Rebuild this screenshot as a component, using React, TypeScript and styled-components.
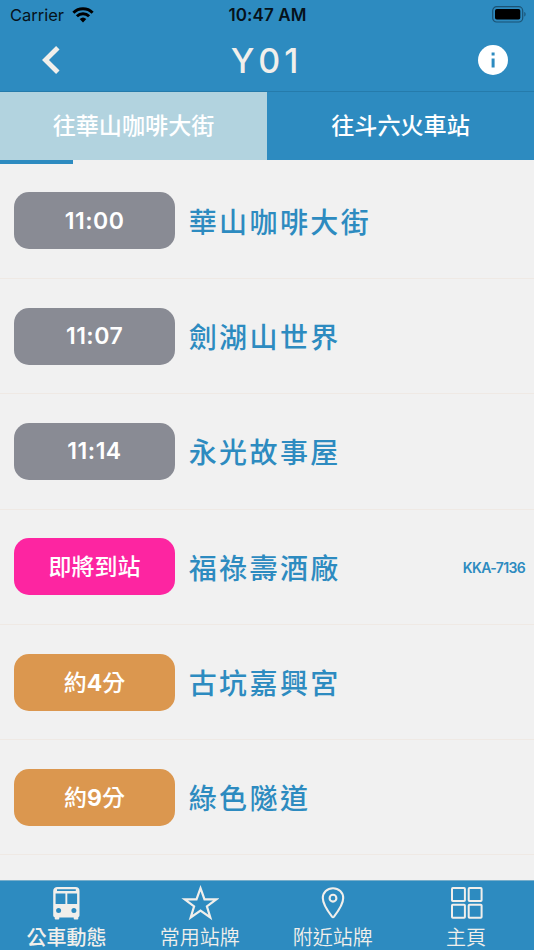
import { FC, ReactNode } from "react";
import styled, { createGlobalStyle } from "styled-components";

interface StopType {
    name: string,
    status: string,
    kind: "later" | "arriving" | "soon",
    plate?: string
}

interface NavType {
    label: string,
    icon: ReactNode,
    active?: boolean
}

const badgeColors = {
    later: "#898b94",
    arriving: "#fd25a1",
    soon: "#db974f"
};

const stops: StopType[] = [
    { name: "華山咖啡大街", status: "11:00", kind: "later" },
    { name: "劍湖山世界", status: "11:07", kind: "later" },
    { name: "永光故事屋", status: "11:14", kind: "later" },
    { name: "福祿壽酒廠", status: "即將到站", kind: "arriving", plate: "KKA-7136" },
    { name: "古坑嘉興宮", status: "約4分", kind: "soon" },
    { name: "綠色隧道", status: "約9分", kind: "soon" }
];

const WifiIcon = () => (
    <svg width="22" height="16" viewBox="0 0 22 16">
        <g fill="none" stroke="#000" strokeWidth="3">
            <path d="M1.4 5.7a13.7 13.7 0 0 1 19.2 0" />
            <path d="M4.9 9.3a8.7 8.7 0 0 1 12.2 0" />
        </g>
        <path d="M7.7 12.1a4.8 4.8 0 0 1 6.6 0L11 15.5z" />
    </svg>
);

const BatteryIcon = () => (
    <svg width="35" height="17" viewBox="0 0 35 17">
        <rect x="0.7" y="0.7" width="30" height="15.3" rx="4" fill="none" stroke="#1b5374" strokeWidth="1.2" />
        <rect x="3" y="3" width="25.3" height="10.6" rx="1.8" />
        <path d="M32.3 6c1.7.4 1.7 4.2 0 4.6z" fill="#1b5374" />
    </svg>
);

const BackIcon = () => (
    <svg width="20" height="30" viewBox="0 0 20 30">
        <path d="M16.8 2.8 4.5 15l12.3 12.2" fill="none" stroke="#f1efeb" strokeWidth="4.9" />
    </svg>
);

const InfoIcon = () => (
    <svg width="30" height="30" viewBox="0 0 30 30">
        <circle cx="15" cy="15" r="15" fill="#fff" />
        <path d="M13.6 7.6h3v2.9h-3zM13.6 13.6h3v9h-3z" fill="#2d8bc0" />
    </svg>
);

const BusIcon = () => (
    <svg width="28" height="36" viewBox="0 0 28 36">
        <path
            fillRule="evenodd"
            d="M4.5 2h18a4 4 0 0 1 4 4v24.5a2 2 0 0 1-1.2 1.8v1.2q0 1-1 1h-2.6q-1 0-1-1v-1H6.3v1q0 1-1 1H2.7q-1 0-1-1v-1.2A2 2 0 0 1 .2 30.5V6a4 4 0 0 1 4.300-4zM4 4.300v1.600h18.800V4.300zM2.600 8.500v10.600h9.800V8.500zM14.300 8.500v10.600h9.800V8.500zM5.600 23a2.500 2.500 0 1 0 0 5 2.500 2.500 0 0 0 0-5zM20.900 23a2.500 2.500 0 1 0 0 5 2.500 2.500 0 0 0 0-5z"
            fill="#f1efeb"
        />
    </svg>
);

const StarIcon = () => (
    <svg width="38" height="36" viewBox="0 0 38 36">
        <path
            d="M19.5 3.2 23.5 14.3H35.3L25.9 21.3 29.3 32.5 19.5 25.6 9.7 32.5 13.1 21.3 3.7 14.3H15.5z"
            fill="none"
            stroke="#f1efeb"
            strokeWidth="2.2"
        />
    </svg>
);

const PinIcon = () => (
    <svg width="24" height="36" viewBox="0 0 24 36">
        <g fill="none" stroke="#f1efeb" strokeWidth="2.1">
            <path d="M12 3.2C6.2 3.2 1.8 7.4 1.8 13c0 6.3 6 14.5 9.2 18.7q1 1.2 2 0C16.2 27.5 22.2 19.3 22.2 13c0-5.6-4.4-9.8-10.2-9.8z" />
            <circle cx="12" cy="13.2" r="3.4" />
        </g>
    </svg>
);

const GridIcon = () => (
    <svg width="34" height="36" viewBox="0 0 34 36">
        <g fill="none" stroke="#f1efeb" strokeWidth="2">
            <rect x="3" y="3.100" width="12.9" height="12.9" rx="0.8" />
            <rect x="19.7" y="3.100" width="12.9" height="12.9" rx="0.8" />
            <rect x="3" y="19.8" width="12.9" height="12.9" rx="0.8" />
            <rect x="19.7" y="19.8" width="12.9" height="12.9" rx="0.8" />
        </g>
    </svg>
);

const navItems: NavType[] = [
    { label: "公車動態", icon: <BusIcon />, active: true },
    { label: "常用站牌", icon: <StarIcon /> },
    { label: "附近站牌", icon: <PinIcon /> },
    { label: "主頁", icon: <GridIcon /> }
];

// the minutes are drawn heavier than the words around them
const StatusText: FC<{ text: string }> = ({ text }) => (
    <span>
        {text.split(/(\d+)/).map((part, i) => i % 2 ? <b key={i}>{part}</b> : part)}
    </span>
);

const StopRow: FC<{ stop: StopType }> = ({ stop }) => (
    <Row>
        <Badge $kind={stop.kind}>
            {stop.kind === "soon" ? <StatusText text={stop.status} /> : stop.status}
        </Badge>
        <StopName>{stop.name}</StopName>
        {stop.plate && <Plate>{stop.plate}</Plate>}
    </Row>
);

export default function App() {
    return (
        <Screen>
            <GlobalStyle />
            <StatusBar>
                <Carrier>Carrier <WifiIcon /></Carrier>
                <Clock>10:47 AM</Clock>
                <BatteryIcon />
            </StatusBar>
            <Header>
                <BackIcon />
                <Title>Y01</Title>
                <InfoIcon />
            </Header>
            <Tabs>
                <Tab $active>往華山咖啡大街</Tab>
                <Tab>往斗六火車站</Tab>
            </Tabs>
            <Progress><ProgressBar /></Progress>
            <List>
                {stops.map((stop) => <StopRow key={stop.name} stop={stop} />)}
            </List>
            <BottomNav>
                {navItems.map((item) => (
                    <NavItem key={item.label} $active={item.active}>
                        {item.icon}
                        <span>{item.label}</span>
                    </NavItem>
                ))}
            </BottomNav>
        </Screen>
    )
}

const GlobalStyle = createGlobalStyle`
    *{
        box-sizing: border-box;
    }

    body{
        margin: 0;
        overflow: hidden;
        font-family: Inter, "Noto Sans CJK TC", sans-serif;
    }

    svg{
        display: block;
        flex-shrink: 0;
    }
`

const Screen = styled.div`
    width: 534px;
    height: 950px;
    display: flex;
    flex-direction: column;
    overflow: hidden;
    background-color: #f1f1f1;
`

const StatusBar = styled.div`
    height: 30px;
    flex-shrink: 0;
    display: grid;
    grid-template-columns: 1fr auto 1fr;
    align-items: center;
    padding: 0 7px 0 10px;
    color: #06121a;
    font-size: 17px;
    line-height: 30px;
    background-color: #2d8bc0;

    > svg{
        justify-self: end;
        margin-bottom: 2px;
    }
`

const Carrier = styled.div`
    display: flex;
    align-items: center;
    gap: 7.5px;
    font-size: 16.5px;
`

const Clock = styled.div`
    margin-right: 2px;
    font-weight: 600;
    letter-spacing: 0.1px;
`

const Header = styled.header`
    height: 62px;
    flex-shrink: 0;
    display: flex;
    justify-content: space-between;
    align-items: center;
    padding: 0 26px 1px 41px;
    border-bottom: 1px solid #257bab;
    background-color: #2d8bc0;
`

const Title = styled.h1`
    margin: 0 6px 0 0;
    color: #f1efeb;
    font-size: 34px;
    font-weight: 500;
    letter-spacing: 4px;
`

const Tabs = styled.div`
    height: 67.7px;
    flex-shrink: 0;
    display: flex;
`

const Tab = styled.div<{ $active?: boolean }>`
    flex: 1;
    display: flex;
    justify-content: center;
    align-items: center;
    padding-bottom: 4px;
    color: #ffffff;
    font-size: 23.1px;
    font-weight: 500;
    background-color: ${({ $active }) => $active ? "#b2d3df" : "#2d8bc0"};
`

const Progress = styled.div`
    height: 4px;
    flex-shrink: 0;
`

const ProgressBar = styled.div`
    width: 73px;
    height: 100%;
    background-color: #2d8bc0;
`

const List = styled.main`
    flex: 1;
    min-height: 0;
    overflow: hidden;
`

const Row = styled.div`
    height: 115.3px;
    display: flex;
    align-items: center;
    padding: 0 9px 0 14.4px;
    border-bottom: 1px solid #efe9e4;
`

const Badge = styled.div<{ $kind: StopType["kind"] }>`
    width: 160.3px;
    height: 57px;
    display: flex;
    justify-content: center;
    align-items: center;
    padding-bottom: ${({ $kind }) => $kind === "later" ? 0 : 3}px;
    border-radius: 15px;
    color: #ffffff;
    font-size: 23px;
    font-weight: ${({ $kind }) => $kind === "later" ? 600 : 500};
    letter-spacing: ${({ $kind }) => $kind === "later" ? 0.5 : 0}px;
    background-color: ${({ $kind }) => badgeColors[$kind]};
`

const StopName = styled.div`
    margin-left: 14px;
    color: #2d8bc0;
    font-size: 28px;
    font-weight: 500;
    letter-spacing: 2.4px;
`

const Plate = styled.div`
    margin-left: auto;
    padding-top: 2px;
    color: #2d8bc0;
    font-size: 14px;
    font-weight: 600;
    letter-spacing: -0.65px;
`

const BottomNav = styled.nav`
    height: 69.7px;
    flex-shrink: 0;
    display: flex;
    padding-right: 1.5px;
    border-top: 1px solid #78aecb;
    background-color: #2d8bc0;
`

const NavItem = styled.div<{ $active?: boolean }>`
    flex: 1;
    display: flex;
    flex-direction: column;
    align-items: center;
    padding-top: 4px;
    color: #f1efeb;
    font-size: 20px;
    font-weight: ${({ $active }) => $active ? 500 : 350};
    line-height: 34px;
`
